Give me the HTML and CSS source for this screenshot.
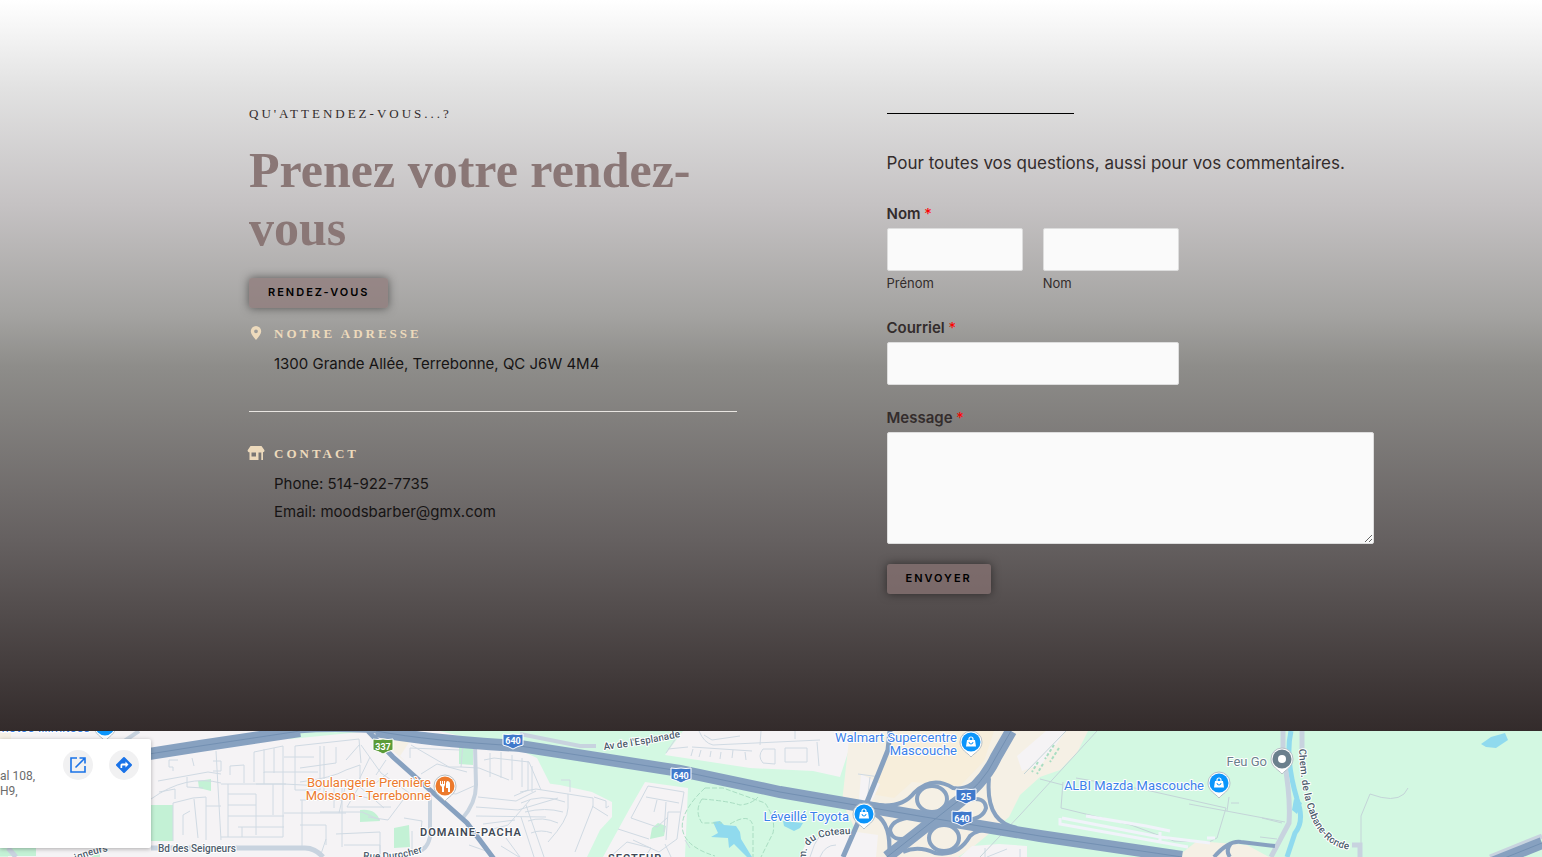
FILE: index.html
```
<!DOCTYPE html>
<html lang="fr">
<head>
	<meta charset="UTF-8">
	<meta name="viewport" content="width=device-width, initial-scale=1">
	<title>Rendez-vous</title>
	<link rel="stylesheet" href="styles.css">
</head>
<body>
	<main class="contact">
		<section class="infos">
			<h6 class="label">Qu'attendez-vous...?</h6>
			<h2 class="title">Prenez votre rendez-vous</h2>
			<a href="#rdv" class="btn">Rendez-vous</a>

			<div class="info-box">
				<svg class="icon" viewBox="0 0 18 18" aria-hidden="true">
					<path fill-rule="evenodd" d="M9 2a5.2 5.2 0 0 0-5.2 5.2C3.800 10 6 12.200 9 16c3-3.800 5.200-6 5.200-8.800A5.200 5.200 0 0 0 9 2zm0 3.400a1.900 1.900 0 1 1 0 3.800 1.900 1.900 0 0 1 0-3.800z"/>
				</svg>
				<div class="info-text">
					<h6 class="label">Notre adresse</h6>
					<p>1300 Grande Allée, Terrebonne, QC J6W 4M4</p>
				</div>
			</div>
			<hr class="separator">
			<div class="info-box">
				<svg class="icon" viewBox="0 0 18 18" aria-hidden="true">
					<path fill-rule="evenodd" d="M3.500 2h11l2.800 4c.6 1.200-.2 2.300-1.300 2.300V16h-1.700V8.500h-2.800V16H2.500V8.300C1.200 8.300.2 7.200.8 6zM4.500 8.500v4h4.500v-4z"/>
				</svg>
				<div class="info-text">
					<h6 class="label">Contact</h6>
					<p>Phone: 514-922-7735</p>
					<p>Email: moodsbarber@gmx.com</p>
				</div>
			</div>
		</section>

		<section class="message">
			<hr class="line">
			<p class="intro">Pour toutes vos questions, aussi pour vos commentaires.</p>
			<form>
				<fieldset class="field short">
					<legend>Nom <span class="required">*</span></legend>
					<div class="names">
						<div>
							<input type="text" id="prenom" required>
							<label class="sublabel" for="prenom">Prénom</label>
						</div>
						<div>
							<input type="text" id="nom" required>
							<label class="sublabel" for="nom">Nom</label>
						</div>
					</div>
				</fieldset>
				<div class="field short">
					<label for="courriel">Courriel <span class="required">*</span></label>
					<input type="email" id="courriel" required>
				</div>
				<div class="field">
					<label for="texte">Message <span class="required">*</span></label>
					<textarea id="texte" required></textarea>
				</div>
				<button type="submit" class="btn">Envoyer</button>
			</form>
		</section>
	</main>

	<section class="map">
		<svg class="map-canvas" viewBox="0 731 1542 126" preserveAspectRatio="xMinYMin slice">
			<defs>
				<g id="pin">
					<path class="pin-edge" d="M0 15C-3 11-11 8-11 0a11 11 0 0 1 22 0C11 8 3 11 0 15z"/>
					<circle r="9.500"/>
				</g>
				<g id="bag">
					<path fill="#fff" d="M-4-2h8l1 6.500H-5z"/>
					<path fill="none" stroke="#fff" stroke-width="1.200" d="M-2-2v-1a2 2 0 0 1 4 0v1"/>
					<path fill="none" stroke="#0b95fb" d="M-2 0a2 2 0 0 0 4 0"/>
				</g>
				<path id="shield" d="M-10-7Q-5-6 0-7 5-6 10-7V4Q5 5 0 8-5 5-10 4z"/>
				<path id="ronde" d="M1299 749C1301 790 1308 850 1356 850"/>
				<path id="esplanade" d="M604 750Q644 745 690 735"/>
				<path id="coteau" d="M806 860C805 840 817 835 852 834"/>
				<path id="seigneurs" d="M76 861Q95 853 114 850"/>
				<path id="durocher" d="M363 859Q400 862 428 850"/>
			</defs>

			<!-- land -->
			<path class="park" d="M505 731h1037v126H587l-50-99-17-8z"/>
			<path class="park" d="M0 800h8v57H0zM290 739l80-8h-45l-40 2zM440 731h80v16l-60-11z"/>
			<path class="block" d="M520 757l15 5 10 21 15 2 32 7 20 10v15l-12 13-13 27h-67zM603 857l27-49 15-26 43 6-3 69zM683 731l-18 24 85 13 63 3 27 6 15-46z"/>
			<path class="shop" d="M155 755l84-13-88 12zM0 733h11v6H0zM372 731h35l3 10-10 15 8 8-14-12z"/>
			<path class="shop" d="M850 731h238l-11 22-17 17-20 7-20 18-11 22-36 30-15 10h-92l-8-22-16-33z"/>
			<path class="commerce" d="M898 731h96l-10 30-24 25-48-4-18 16-24-4z"/>
			<path class="block" d="M861 774l19 10-10 21-11-5zM800 857l5-12 15-10 30-4 28 4-2 22zM960 857l12-11 27-2 28 2v11zM1046 731h20l-24 33-20 7-5-15z"/>
			<path class="shop" d="M1177 857l20-16 50 4 22 12z"/>
			<path class="park dark" d="M151 805h22v36h-22zM198 781l13-2v12l-12-3zM459 746h14v19l-14-1zM360 810q16-2 20 11l-20 1zM394 828l15-3 1 22-16 1zM652 828l6-5 8 3-2 10-14 3z"/>
			<path class="park dark thin" d="M0 852h36M92 856h8"/>
			<path class="water" d="M713 822l7-1 4 4 12 1 4 6 1 7 11 18h-5l-13-13-5 4-1-10-17-1 7-4zM783 821l20 2-3 5-6 3-10-5zM1481 744l10-7 14-4 3 7-12 8-10-1z"/>
			<path class="river" d="M1291 731c-5 22 0 48 6 68q8 22-2 34l-8 24"/>
			<path class="water" d="M1294 799l8 4-5 11-5-4z"/>

			<!-- local streets -->
			<g class="street">
				<path d="M216 751l5 89M221 784h63l58 3M151 799q35-25 70-16M158 781l50-9 13 2M187 777v10l16 1M159 792l16-3v10M173 841v-38l20-5 13-1v43M183 835v-20l7-4M206 806h15M194 799l4 39M230 775v-9l14-1v18M213 761h8v10h-8M178 760h-9v7h4v4M192 758l2 8"/>
				<path d="M254 752v30M254 752l29-6v91M264 784v-12h20M264 749v24M274 748v25M228 784v53M228 794h28v41M228 816h56M228 805h28M238 827h46M256 784h30M273 784v31M242 827v10M221 837h62M284 757h30M295 746v44h25v-44M284 772h34M300 800h42M324 746v54M334 780v28M284 813h62M302 800v47M342 784v63M300 825h26v20"/>
				<path d="M295 746l64-7 2 24M336 747v16l-36 5M346 760l14-16M300 782q32-4 46-12l14-5v20l-13 22M347 807h44M361 745l20 28 34 24M370 757l-12 25M320 812h42l18 8M347 779l-8 34M390 757l38 30M360 787l24 21M368 817l20 3 18-24M388 773l-12 10M344 793l24 5M404 818l18 3-1 9h9M386 760l-10 15M336 834l44-2v25M326 839l-6 18M344 845h36v12M412 831v22M410 758v-10l50 2"/>
				<path d="M410 742l4-6 49 7-2 24h-12l-38-22M461 767l18 1 30 12M421 774l16-10 30 8M440 792l16 2 20-9M490 753v24M501 752v26M512 755v25M522 758v29M484 760l10-2 35 4 12 28M478 797l38 4 20-10M476 807l42 3 40-12M476 816l70 1M483 824l32-4M472 835l36-10 22-25M521 817l13 40M528 761v29l-14 6M532 766v26M506 838l14 19M501 846l18 11M469 845l20 7"/>
				<path d="M520 792l16-3 32 5 25 4v8l-18 46M521 803q20-10 44-1M525 812q20-5 38 0M528 821q14-5 30 2M531 833q10-4 21 0M526 805l18 52M568 794v14q0 12-20 34M592 806l16 10M594 797l12 4v7l3-2M561 780h9v12"/>
				<path d="M618 829l31 10M631 818l17-32 36 6-4 24-3 23-18 13-26-12M646 797l33 6M631 818l26 9 11-10M657 800l-3 12M666 802l-2 30M680 812h-12l-2 28M610 857l17-15 24 6-6 9M665 844l6 13M690 848l-5-8"/>
				<path d="M699 731q5 12 14 14l107-5M760 745l1-14M678 735l-12 18M704 735l8 5 28-4M692 747l60 4M668 749l20-2M693 749l-2 7M701 750l-2 7M711 751l-1 6M721 752l-1 7M733 750l-1 8M745 752l1 8"/>
				<path d="M763 749h12v15l-12-1q-6-7 0-14zM785 748h22v14h-22zM817 742l2 24M795 731v8M858 774l22 3M870 777l-2 17M810 857q8-28 22-28M820 857q5-12 16-12M890 857l2-25M1007 849l-20 8M1020 849v8M985 848v9"/>
			</g>
			<g class="path">
				<path d="M1097 731L1020 815 980 857M1066 731l-42 43M1040 779l23 6M1063 782l-2 26 70 17 43 16 35 1 8-4 9-30-80-18-70-12M1189 804l96 18M1227 811l2-14M1231 803h8M1262 818l20 5M1260 837l17 2M1361 844v-28l9-22q24 9 34 0l4-6"/>
			</g>
			<path class="trail" d="M705 788h18l42 15q11 16 8 30l-12 24M705 788c-28 26-36 54 10 68M702 799q26 2 38 6 12-1 18-8M702 799q-8 12 0 24h20M730 824q20-12 23 2v31"/>
			<path class="runway" d="M1086 816l60 10 24 5M1062 818l98 19 50 6M1060 818v6l128 23M1160 832v10M1207 838h8"/>
			<path class="greens" d="M1054 745l-9 14M1059 748l-9 14M1038 762l-6 10M1043 764l-6 10"/>

			<!-- collector roads -->
			<g class="road">
				<path d="M151 848h154q10 0 18 9M8 848l8 9"/>
				<path class="side" d="M475 745l1 40q0 18-14 34M430 795v42q-3 13-12 14M520 734l60 12h16M117 746l22-15"/>
				<path d="M1283 731v24q8 40 6 68l-18 34M1302 731v18M1352 845h8v12M1490 857l52-21"/>
			</g>

			<!-- highways -->
			<g class="highway">
				<path class="wide" d="M130 757L200 746 300 731M376 731Q430 741 520 746L680 771 780 792 925 817 1040 836 1182 857"/>
				<path class="wide" d="M1011 731L996 757Q983 785 953 805L887 857"/>
				<path class="wide" d="M1492 863l50-20"/>
				<path class="thin" d="M260 735Q350 720 470 743"/>
				<path d="M368 731l25 26 37 33 37 33 27 36"/>
				<path d="M890 731l-2 19-21 52-24 55"/>
				<path class="ramp" d="M866 803q34 8 48-10Q932 775 953 788q17 3 32-16M989 778q-4 44 28 50M872 813q20 7 17 44M930 817Q893 815 890 830q2 12 18 8L935 820M950 815l18-15q17-4 18 8-3 11-20 12M903 852q15-7 32 1 23 4 35-17 8-8 30-6"/>
				<ellipse class="ramp" cx="932" cy="799" rx="15" ry="13"/>
				<ellipse class="ramp" cx="944" cy="838" rx="15" ry="13"/>
				<path class="ramp" d="M1275 846l-34-4q-12-2-27 15M1231 843q-6 8-1 14"/>
			</g>
			<g class="lanes">
				<path d="M130 757L200 746 300 731M376 731Q430 741 520 746L680 771 780 792 925 817 1040 836 1182 857M1011 731L996 757Q983 785 953 805L887 857M1492 863l50-20"/>
			</g>

			<!-- road numbers -->
			<g class="shield">
				<use href="#shield" x="513" y="741"/><text x="513" y="744">640</text>
				<use href="#shield" x="681" y="775"/><text x="681" y="779">640</text>
				<use href="#shield" x="962" y="818"/><text x="962" y="822">640</text>
				<use href="#shield" x="966" y="796"/><text x="966" y="800">25</text>
				<use class="green" href="#shield" x="383" y="746"/><text x="383" y="750">337</text>
			</g>

			<!-- street names -->
			<g class="street-name">
				<text x="158" y="852">Bd des Seigneurs</text>
				<text><textPath href="#seigneurs">igneurs</textPath></text>
				<text><textPath href="#durocher">Rue Durocher</textPath></text>
				<text><textPath href="#esplanade">Av de l'Esplanade</textPath></text>
				<text><textPath href="#coteau">m. du Coteau</textPath></text>
				<text><textPath href="#ronde">Chem. de la Cabane-Ronde</textPath></text>
			</g>
			<text class="district" x="420" y="836">DOMAINE-PACHA</text>
			<text class="district" x="608" y="862">SECTEUR</text>

			<!-- places -->
			<g class="place food">
				<text x="431" y="787">Boulangerie Première</text>
				<text x="431" y="800">Moisson - Terrebonne</text>
				<use href="#pin" x="445" y="786"/>
				<path fill="#fff" d="M440 781h1v3h1v-3h1v3h1v-3h1v4l-1 2v5h-2v-5l-2-2zM447 781q3 0 3 3v8h-2v-4h-2v-5z"/>
			</g>
			<g class="place store">
				<text x="90" y="732">Photos Illimitées</text>
				<use href="#pin" x="105" y="726"/>
				<text x="957" y="742">Walmart Supercentre</text>
				<text x="957" y="755">Mascouche</text>
				<use href="#pin" x="971" y="742"/><use href="#bag" x="971" y="742"/>
				<text x="849" y="821">Léveillé Toyota</text>
				<use href="#pin" x="864" y="814"/><use href="#bag" x="864" y="814"/>
				<text x="1204" y="790">ALBI Mazda Mascouche</text>
				<use href="#pin" x="1219" y="783"/><use href="#bag" x="1219" y="783"/>
			</g>
			<g class="place other">
				<text x="1267" y="766">Feu Go</text>
				<use href="#pin" x="1282" y="759"/><circle class="dot" cx="1282" cy="759" r="4"/>
			</g>
		</svg>

		<aside class="map-card">
			<address>al 108,<br>H9,</address>
			<a href="#carte" class="round" aria-label="Agrandir le plan">
				<svg viewBox="0 0 18 18"><path fill="none" stroke="#1a73e8" stroke-width="1.600" d="M8 2H2v14h14v-6M10.500 2H16v5.500M16 2L6.500 11.500"/></svg>
			</a>
			<a href="#itineraire" class="round" aria-label="Itinéraire">
				<svg viewBox="0 0 18 18"><path fill="#1a73e8" d="M8.300 1.300q.7-.7 1.400 0l7 7q.7.7 0 1.400l-7 7q-.7.7-1.400 0l-7-7q-.7-.7 0-1.400z"/><path fill="#fff" d="M5.500 12V9q0-1.500 1.500-1.500h3.500v-2L13.500 8.500l-3 3v-2H7.200V12z"/></svg>
			</a>
		</aside>
	</section>
</body>
</html>
```

FILE: styles.css
```
* {
	box-sizing: border-box;
}
body {
	color: #332c2c;
	font-family: Inter, "Open Sans", sans-serif;
	font-size: 15px;
	line-height: 28px;
	margin: 0;
}
h2, h6, p, hr, fieldset {
	border: none;
	margin: 0;
	padding: 0;
}

/* contact */
main.contact {
	background: linear-gradient(#ffffff 0%, #e2e2e2 12%, #c5c2c3 28%, #a4a3a1 43%, #8e8d8a 50%, #656060 74%, #332b2b 100%);
	display: grid;
	gap: 150px;
	grid-template-columns: 1fr 1fr;
	padding: 104px 168px 137px 249px;
}
.label {
	font-family: "Liberation Serif", serif;
	font-size: 13px;
	font-weight: 400;
	letter-spacing: 3px;
	line-height: 20px;
	text-transform: uppercase;
}
.title {
	color: #8a7776;
	font: bold 50px/58px "Liberation Serif", serif;
	margin: 17px 0 20px;
}
.btn {
	background-color: rgba(138, 116, 117, .68);
	border: none;
	border-radius: 3px;
	box-shadow: 0 0 10px rgba(0, 0, 0, .5);
	color: #000;
	cursor: pointer;
	display: inline-block;
	font: 600 11px/28px Inter, sans-serif;
	letter-spacing: 2px;
	padding: 0 19px 2px;
	text-decoration: none;
	text-transform: uppercase;
}
.info-box {
	color: #161414;
	display: flex;
	gap: 9px;
}
.info-box .icon {
	fill: #eddabc;
	flex: none;
	height: 18px;
	margin-left: -2px;
	width: 18px;
}
.info-box .label {
	color: #eddabc;
	font-weight: 700;
	margin-bottom: 6px;
}
.infos .btn {
	margin-bottom: 16px;
}
.separator {
	background-color: #e9e6e2;
	height: 1px;
	margin: 33px 0 32px;
}

/* form */
.line {
	background-color: #000;
	height: 1px;
	margin: 9px 0 35px;
	width: 187px;
}
.intro {
	font-size: 17px;
}
form {
	margin-top: 27px;
}
.field {
	line-height: 20px;
	margin-bottom: 23px;
}
.field.short {
	width: 60%;
}
.field > label,
.field legend {
	display: block;
	font-weight: 600;
	margin-bottom: 4px;
	padding: 0;
}
.required {
	color: #f00;
	font-weight: 400;
}
.names {
	display: grid;
	gap: 20px;
	grid-template-columns: 1fr 1fr;
	padding-bottom: 2px;
}
input, textarea {
	background-color: #fafafa;
	border: 1px solid #ddd;
	border-radius: 2px;
	display: block;
	font: 15px Inter, sans-serif;
	height: 43px;
	padding: 10px;
	width: 100%;
}
textarea {
	height: 112px;
	resize: vertical;
}
.sublabel {
	display: block;
	font-size: 13px;
	margin-top: 2px;
}
form .btn {
	display: block;
	margin-top: -3px;
}

/* map */
.map {
	background-color: #f5f3f5;
	height: 126px;
	overflow: hidden;
	position: relative;
}
.map-canvas {
	display: block;
	font-family: Roboto, sans-serif;
	height: 100%;
	width: 100%;
}
.park { fill: #d3f8e2; }
.park.dark { fill: #c3f1d5; }
.park.thin { stroke: #c3f1d5; stroke-width: 8; }
.shop { fill: #f5f0e5; }
.commerce { fill: #f7eedb; }
.block { fill: #f5f3f5; }
.water { fill: #90daee; }
.river, .street, .path, .trail, .runway, .greens, .road, .highway, .lanes { fill: none; }
.river { stroke: #90daee; stroke-width: 5; }
.street { stroke: #d0dae3; stroke-width: 1; }
.path { stroke: #c4d4d8; stroke-width: 1; }
.trail { stroke: #a9ddc2; stroke-dasharray: 5 2; }
.runway { stroke: #f1f3fa; stroke-width: 3; }
.greens { stroke: #a9ddc2; stroke-dasharray: 3 2; stroke-width: 2; }
.road { stroke: #c8d3df; stroke-width: 5; }
.road .side { stroke-width: 4; }
.highway { stroke: #87a1c0; stroke-width: 5; }
.highway .wide { stroke-width: 12; }
.highway .thin { stroke-width: 6; }
.highway .ramp { stroke-width: 4; }
.lanes { stroke: #7390b2; stroke-width: 1; }

.shield { fill: #4079cb; stroke: #fff; }
.shield .green { fill: #5b9b38; }
.shield text {
	fill: #fff;
	font-size: 9px;
	font-weight: 700;
	stroke: none;
	text-anchor: middle;
}
.street-name, .district, .place text {
	paint-order: stroke;
	stroke: #fff;
	stroke-linejoin: round;
	stroke-width: 2px;
}
.street-name {
	fill: #4d5c6c;
	font-size: 10px;
	font-weight: 500;
}
.district {
	fill: #3f4955;
	font-size: 11px;
	font-weight: 600;
	letter-spacing: 1px;
}
.place text {
	font-size: 13px;
	text-anchor: end;
}
.pin-edge { fill: #fff; stroke: #b7c0c6; }
.food { fill: #ec7a2d; }
.store { fill: #3b82ea; }
.store use { fill: #0b95fb; }
.other { fill: #6b7f8d; }
.dot { fill: #fff; }

.map-card {
	background-color: #fff;
	border-radius: 0 2px 2px 0;
	box-shadow: 0 1px 4px rgba(0, 0, 0, .3);
	display: flex;
	gap: 16px;
	height: 109px;
	left: 0;
	padding: 11px 12px 0 0;
	position: absolute;
	top: 8px;
	width: 151px;
}
.map-card address {
	color: #6b6b6b;
	flex: 1;
	font: 12px/15px Roboto, sans-serif;
	padding-top: 19px;
	white-space: nowrap;
}
.map-card .round {
	align-items: center;
	background-color: #f1f1f2;
	border-radius: 50%;
	display: flex;
	height: 30px;
	justify-content: center;
	width: 30px;
}
.map-card svg {
	height: 18px;
	width: 18px;
}
```
